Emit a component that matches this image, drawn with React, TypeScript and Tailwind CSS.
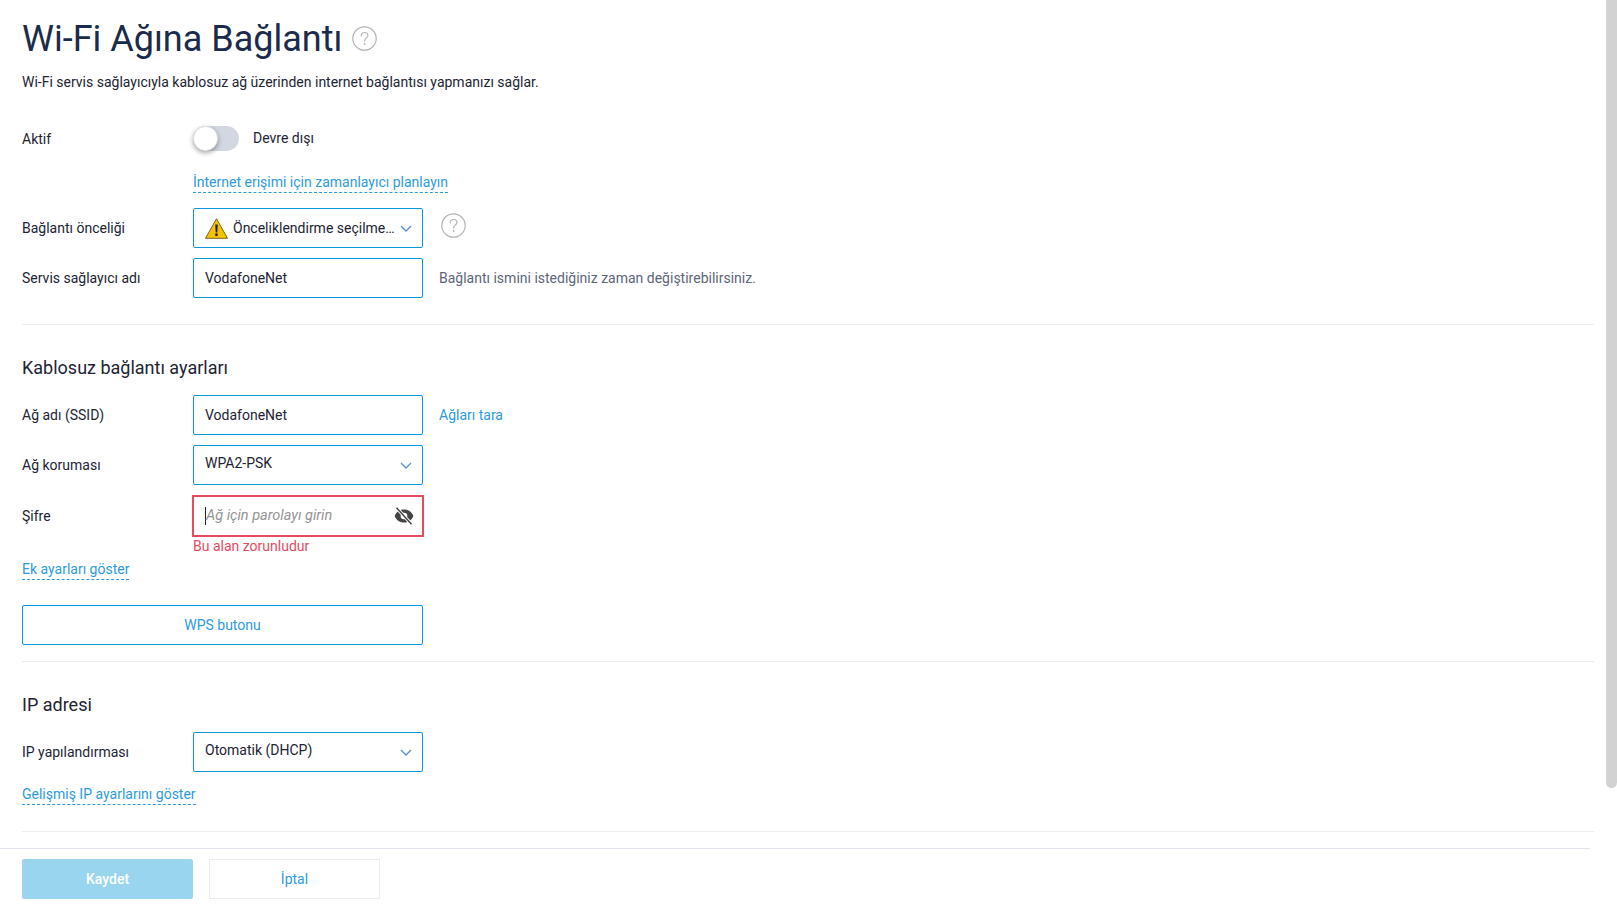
import React from 'react';

const HelpIcon = ({ className = '' }: { className?: string }) => (
  <svg viewBox="0 0 25 25" className={`w-[25px] h-[25px] shrink-0 ${className}`} fill="none">
    <circle cx="12.5" cy="12.5" r="11.7" stroke="#b4b4b4" strokeWidth="1.2" />
    <path d="M9.2 9.8c0-2 1.5-3.3 3.4-3.3s3.3 1.2 3.3 3c0 2.6-3.3 2.7-3.3 5.4" stroke="#b4b4b4" strokeWidth="1.2" strokeLinecap="round" />
    <circle cx="12.6" cy="18" r="0.9" fill="#b4b4b4" />
  </svg>
);

const Chevron = () => (
  <svg viewBox="0 0 12 7" className="w-[12px] h-[7px] shrink-0" fill="none">
    <path d="M1 1l5 5 5-5" stroke="#5a8fc7" strokeWidth="1.3" />
  </svg>
);

const WarningIcon = () => (
  <svg viewBox="0 0 23 21" className="w-[23px] h-[21px] shrink-0">
    <path d="M11.5 .7L22.500 20.300H.5z" fill="#f6c200" stroke="#6b5a10" strokeWidth="0.9" strokeLinejoin="round" />
    <path d="M10.300 6.500h2.400l-.4 8h-1.600z" fill="#1a1a1a" />
    <rect x="10.300" y="15.500" width="2.400" height="2.400" fill="#1a1a1a" />
  </svg>
);

const EyeOffIcon = () => (
  <svg viewBox="0 0 20 18" className="w-[20px] h-[18px] shrink-0">
    <path d="M10 2.500C5.500 2.500 1.900 5.200 .6 9c1.300 3.800 4.900 6.500 9.400 6.500s8.100-2.700 9.400-6.500C18.100 5.200 14.500 2.500 10 2.500z" fill="#444" />
    <circle cx="10" cy="9" r="3.300" fill="#fff" />
    <path d="M2.500 .8l15 16.400" stroke="#fff" strokeWidth="3.200" />
    <path d="M2.500 .8l15 16.400" stroke="#444" strokeWidth="1.500" />
  </svg>
);

const Label = ({ children }: { children: React.ReactNode }) => (
  <div className="w-[171px] shrink-0 text-[14px] leading-5 text-[#1d2433]">{children}</div>
);

const TextBox = ({ value }: { value: string }) => (
  <input
    readOnly
    value={value}
    className="w-[230px] h-10 px-[11px] border border-[#0b97dc] rounded-[2px] text-[14px] text-[#1d2433] outline-none bg-white"
  />
);

const SelectBox = ({ value }: { value: string }) => (
  <div className="w-[230px] h-10 pl-[11px] pr-[10px] border border-[#0b97dc] rounded-[2px] flex items-center justify-between text-[14px] text-[#1d2433]">
    <span className="-mt-[3px]">{value}</span>
    <Chevron />
  </div>
);

const DashedLink = ({ children }: { children: React.ReactNode }) => (
  <a className="block w-fit text-[14px] leading-[19px] text-[#2d9be0] border-b border-dashed border-[#2d9be0]">{children}</a>
);

const Divider = ({ className = '' }: { className?: string }) => <div className={`h-px bg-[#ececec] ${className}`} />;

export default function App() {
  return (
    <div className="flex h-[906px] overflow-hidden bg-white font-['Roboto',sans-serif]">
      <div className="flex-1 min-w-0 flex flex-col">
        <main className="pl-[22px] pr-[12px]">
          <div className="mt-[19px] flex items-center gap-[10px]">
            <h1 className="text-[36px] leading-10 font-normal text-[#1b2b4b]">Wi-Fi Ağına Bağlantı</h1>
            <HelpIcon className="-mt-[2px]" />
          </div>
          <p className="mt-[13px] text-[14px] leading-5 text-[#1d2433]">
            Wi-Fi servis sağlayıcıyla kablosuz ağ üzerinden internet bağlantısı yapmanızı sağlar.
          </p>

          <div className="mt-[34px] flex items-center h-[25px]">
            <Label>Aktif</Label>
            <div className="w-[46px] h-[25px] rounded-full bg-[#d3d7e1] shrink-0">
              <div className="w-[25px] h-[25px] rounded-full bg-white border border-[#e4e4e4] shadow-[0_2px_5px_rgba(0,0,0,0.35)]" />
            </div>
            <span className="ml-[14px] text-[14px] text-[#1d2433]">Devre dışı</span>
          </div>

          <div className="mt-[22px] pl-[171px]">
            <DashedLink>İnternet erişimi için zamanlayıcı planlayın</DashedLink>
          </div>

          <div className="mt-[15px] flex items-center">
            <Label>Bağlantı önceliği</Label>
            <div className="w-[230px] h-10 pl-[11px] pr-[10px] border border-[#0b97dc] rounded-[2px] flex items-center text-[14px] text-[#1d2433]">
              <WarningIcon />
              <span className="ml-[5px] flex-1 whitespace-nowrap">Önceliklendirme seçilme…</span>
              <Chevron />
            </div>
            <HelpIcon className="ml-[18px] -mt-[6px]" />
          </div>

          <div className="mt-[10px] flex items-center">
            <Label>Servis sağlayıcı adı</Label>
            <TextBox value="VodafoneNet" />
            <span className="ml-[16px] text-[14px] text-[#5e6679]">Bağlantı ismini istediğiniz zaman değiştirebilirsiniz.</span>
          </div>

          <Divider className="mt-[26px]" />

          <h2 className="mt-[31px] text-[18px] leading-6 font-normal text-[#1d2433]">Kablosuz bağlantı ayarları</h2>

          <div className="mt-[15px] flex items-center">
            <Label>Ağ adı (SSID)</Label>
            <TextBox value="VodafoneNet" />
            <a className="ml-[16px] text-[14px] text-[#2d9be0]">Ağları tara</a>
          </div>

          <div className="mt-[10px] flex items-center">
            <Label>Ağ koruması</Label>
            <SelectBox value="WPA2-PSK" />
          </div>

          <div className="mt-[10px] flex items-center">
            <Label>Şifre</Label>
            <div className="w-[232px] -ml-px h-[42px] pl-[11px] pr-[8px] border-2 border-[#e84a5f] flex items-center">
              <span className="w-px h-[18px] bg-[#1d2433]" />
              <span className="flex-1 text-[14.5px] italic text-[#949494]">Ağ için parolayı girin</span>
              <EyeOffIcon />
            </div>
          </div>
          <div className="pl-[171px] text-[14px] leading-[18px] text-[#e84a5f]">Bu alan zorunludur</div>

          <div className="mt-[5px]">
            <DashedLink>Ek ayarları göster</DashedLink>
          </div>

          <button className="mt-[25px] block w-[401px] h-10 border border-[#0b97dc] rounded-[2px] text-[14px] text-[#2d9be0] bg-white">
            WPS butonu
          </button>

          <Divider className="mt-[16px]" />

          <h2 className="mt-[31px] text-[18px] leading-6 font-normal text-[#1d2433]">IP adresi</h2>

          <div className="mt-[15px] flex items-center">
            <Label>IP yapılandırması</Label>
            <SelectBox value="Otomatik (DHCP)" />
          </div>

          <div className="mt-[13px]">
            <DashedLink>Gelişmiş IP ayarlarını göster</DashedLink>
          </div>

          <Divider className="mt-[26px]" />
        </main>

        <footer className="mt-[16px] mr-[16px] border-t border-[#dfe3ec] pt-[10px] pl-[22px] flex gap-[16px]">
          <button className="w-[171px] h-10 rounded-[2px] bg-[#9ad5ef] text-[14px] font-medium text-white">Kaydet</button>
          <button className="w-[171px] h-10 border border-[#ececec] text-[14px] text-[#2d9be0] bg-white">İptal</button>
        </footer>
      </div>

      <div className="w-[11px] h-[788px] shrink-0 bg-[#d2d2d2] rounded-b-[6px]" />
    </div>
  );
}
